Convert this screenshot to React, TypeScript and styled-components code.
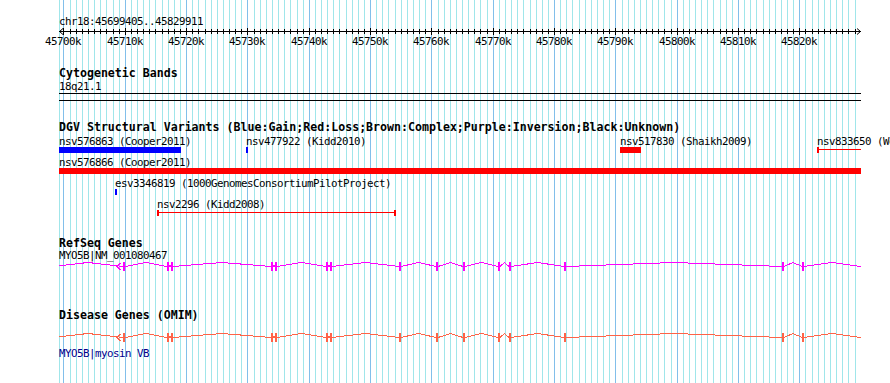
import React from 'react'
import styled, { createGlobalStyle } from 'styled-components'

const GlobalStyle = createGlobalStyle`
  html, body {
    margin: 0;
    padding: 0;
    background: #fff;
    overflow: hidden;
  }
`

// genomic window shown in the panel
const START = 45699405
const LEFT = 59
const WIDTH = 802
const PX_PER_KB = 6.132
const toX = (bp: number) => 59.85 + ((bp - START) / 1000) * PX_PER_KB

const mono = `"DejaVu Sans Mono", "Liberation Mono", monospace`

const Panel = styled.div`
  position: relative;
  width: 890px;
  height: 383px;
  overflow: hidden;
  background: #fff;
  font-family: ${mono};
`

const GridLayer = styled.svg`
  position: absolute;
  left: 0;
  top: 0;
`

const Tracks = styled.div`
  position: relative;
  display: flex;
  flex-direction: column;
  padding-left: ${LEFT}px;
  width: ${WIDTH}px;
`

const Track = styled.section<{ $gap: number }>`
  display: flex;
  flex-direction: column;
  margin-top: ${(p) => p.$gap}px;
`

const Title = styled.div`
  height: 13px;
  font-size: 11.6px;
  line-height: 13px;
  font-weight: bold;
  color: #000;
  white-space: nowrap;
`

const Label = styled.div<{ $color?: string; $gap?: number }>`
  height: 11px;
  margin-top: ${(p) => p.$gap || 0}px;
  font-size: 10.8px;
  letter-spacing: -0.5px;
  line-height: 11px;
  color: ${(p) => p.$color || '#000'};
  white-space: nowrap;
`

const RulerSvg = styled.svg`
  display: block;
  overflow: visible;
`

const Band = styled.div`
  height: 6px;
  margin-top: 1px;
  border-top: 1px solid #000;
  border-bottom: 1px solid #000;
`

const Rows = styled.div`
  display: flex;
  flex-direction: column;
  margin-top: 2px;
`

const Row = styled.div`
  position: relative;
  height: 21px;
`

const Feature = styled.div<{ $x: number }>`
  position: absolute;
  top: 0;
  left: ${(p) => p.$x - LEFT}px;
  display: flex;
  flex-direction: column;
`

const Bar = styled.div<{ $w: number; $color: string }>`
  width: ${(p) => p.$w}px;
  height: 6px;
  background: ${(p) => p.$color};
`

const Span = styled.div<{ $w: number; $color: string; $open?: boolean }>`
  position: relative;
  box-sizing: border-box;
  width: ${(p) => p.$w}px;
  height: 6px;
  border-left: 2px solid ${(p) => p.$color};
  border-right: ${(p) => (p.$open ? 'none' : `2px solid ${p.$color}`)};

  &::before {
    content: '';
    position: absolute;
    left: 0;
    right: 0;
    top: 2px;
    height: 1px;
    background: ${(p) => p.$color};
  }
`

const GeneSvg = styled.svg<{ $gap?: number }>`
  display: block;
  margin-top: ${(p) => p.$gap || 0}px;
`

const BLUE = '#0000ff'
const RED = '#ff0000'

type Variant = {
  label: string
  x: number
  w: number
  color: string
  kind?: 'bar' | 'span'
  open?: boolean
}

const variantRows: Variant[][] = [
  [
    { label: 'nsv576863 (Cooper2011)', x: 59, w: 122, color: BLUE },
    { label: 'nsv477922 (Kidd2010)', x: 246, w: 2, color: BLUE },
    { label: 'nsv517830 (Shaikh2009)', x: 620, w: 21, color: RED },
    { label: 'nsv833650 (Wong2012)', x: 817, w: 44, color: RED, kind: 'span', open: true }
  ],
  [{ label: 'nsv576866 (Cooper2011)', x: 59, w: 802, color: RED }],
  [{ label: 'esv3346819 (1000GenomesConsortiumPilotProject)', x: 115, w: 2, color: BLUE }],
  [{ label: 'nsv2296 (Kidd2008)', x: 157, w: 239, color: RED, kind: 'span' }]
]

const kbMarks: number[] = []
for (let k = 45700; k <= 45829; k++) kbMarks.push(k)

const Grid = () => (
  <GridLayer width={890} height={383} shapeRendering="crispEdges">
    <line x1={59.5} x2={59.5} y1={0} y2={383} stroke="#a0e6ea" />
    {kbMarks.map((k) => {
      const x = Math.round(toX(k * 1000)) + 0.5
      const major = k % 10 === 0
      return (
        <line
          key={k}
          x1={x}
          x2={x}
          y1={0}
          y2={383}
          stroke={major ? '#82bfea' : '#a0e6ea'}
        />
      )
    })}
  </GridLayer>
)

const Ruler = () => (
  <RulerSvg width={WIDTH} height={22} viewBox={`${LEFT} 0 ${WIDTH} 22`}>
    <g shapeRendering="crispEdges" stroke="#000">
      <line x1={59} x2={861} y1={4.5} y2={4.5} />
      {kbMarks.map((k) => {
        const x = Math.round(toX(k * 1000)) + 0.5
        const major = k % 10 === 0
        return <line key={k} x1={x} x2={x} y1={major ? 1 : 2} y2={major ? 8 : 7} />
      })}
    </g>
    <polyline points="63,1.5 59.5,4.5 63,7.5" fill="none" stroke="#000" />
    <polyline points="857,1.5 860.5,4.5 857,7.5" fill="none" stroke="#000" />
    {kbMarks
      .filter((k) => k % 10 === 0)
      .map((k) => (
        <text
          key={k}
          x={Math.round(toX(k * 1000))}
          y={18}
          textAnchor="middle"
          fontFamily={mono}
          fontSize={10.8}
          letterSpacing={-0.5}
          fill="#000"
        >
          {k}k
        </text>
      ))}
  </RulerSvg>
)

// exon starts in screen pixels (MYO5B, minus strand)
const EXONS = [123, 167, 171, 271, 275, 326, 330, 399, 436, 463, 498, 509, 564, 782, 802]
const EXON_W = 2
const MID = 5.5

const hats: [number, number][] = [[53, EXONS[0]]]
for (let i = 0; i < EXONS.length - 1; i++) hats.push([EXONS[i] + EXON_W, EXONS[i + 1]])
hats.push([EXONS[EXONS.length - 1] + EXON_W, 860])

const GeneModel = ({ color, gap }: { color: string; gap?: number }) => (
  <GeneSvg $gap={gap} width={WIDTH} height={12} viewBox={`${LEFT} 0 ${WIDTH} 12`}>
    <g fill="none" stroke={color} shapeRendering="crispEdges">
      {hats.map(([a, b]) => {
        const h = Math.min(4, (b - a) / 2)
        return (
          <polyline key={a} points={`${a},${MID} ${(a + b) / 2},${MID - h} ${b},${MID}`} />
        )
      })}
      <line x1={860} x2={861} y1={MID} y2={MID} />
      <polyline points="120.5,2 117,5.5 120.5,9" />
    </g>
    <g fill={color} shapeRendering="crispEdges">
      {EXONS.map((x) => (
        <rect key={x} x={x} y={1} width={EXON_W} height={9} />
      ))}
    </g>
  </GeneSvg>
)

const App = () => (
  <>
    <GlobalStyle />
    <Panel>
      <Grid />
      <Tracks>
        <Track $gap={16}>
          <Label>chr18:45699405..45829911</Label>
          <Ruler />
        </Track>

        <Track $gap={18}>
          <Title>Cytogenetic Bands</Title>
          <Label $gap={1}>18q21.1</Label>
          <Band />
        </Track>

        <Track $gap={20}>
          <Title>
            DGV Structural Variants
            (Blue:Gain;Red:Loss;Brown:Complex;Purple:Inversion;Black:Unknown)
          </Title>
          <Rows>
            {variantRows.map((row, i) => (
              <Row key={i}>
                {row.map((v) => (
                  <Feature key={v.label} $x={v.x}>
                    <Label>{v.label}</Label>
                    {v.kind === 'span' ? (
                      <Span $w={v.w} $color={v.color} $open={v.open} />
                    ) : (
                      <Bar $w={v.w} $color={v.color} />
                    )}
                  </Feature>
                ))}
              </Row>
            ))}
          </Rows>
        </Track>

        <Track $gap={17}>
          <Title>RefSeq Genes</Title>
          <Label>MYO5B|NM_001080467</Label>
          <GeneModel color="#ff00ff" />
        </Track>

        <Track $gap={36}>
          <Title>Disease Genes (OMIM)</Title>
          <GeneModel color="#ff6347" gap={10} />
          <Label $color="#00008b" $gap={4}>
            MYO5B|myosin VB
          </Label>
        </Track>
      </Tracks>
    </Panel>
  </>
)

export default App
